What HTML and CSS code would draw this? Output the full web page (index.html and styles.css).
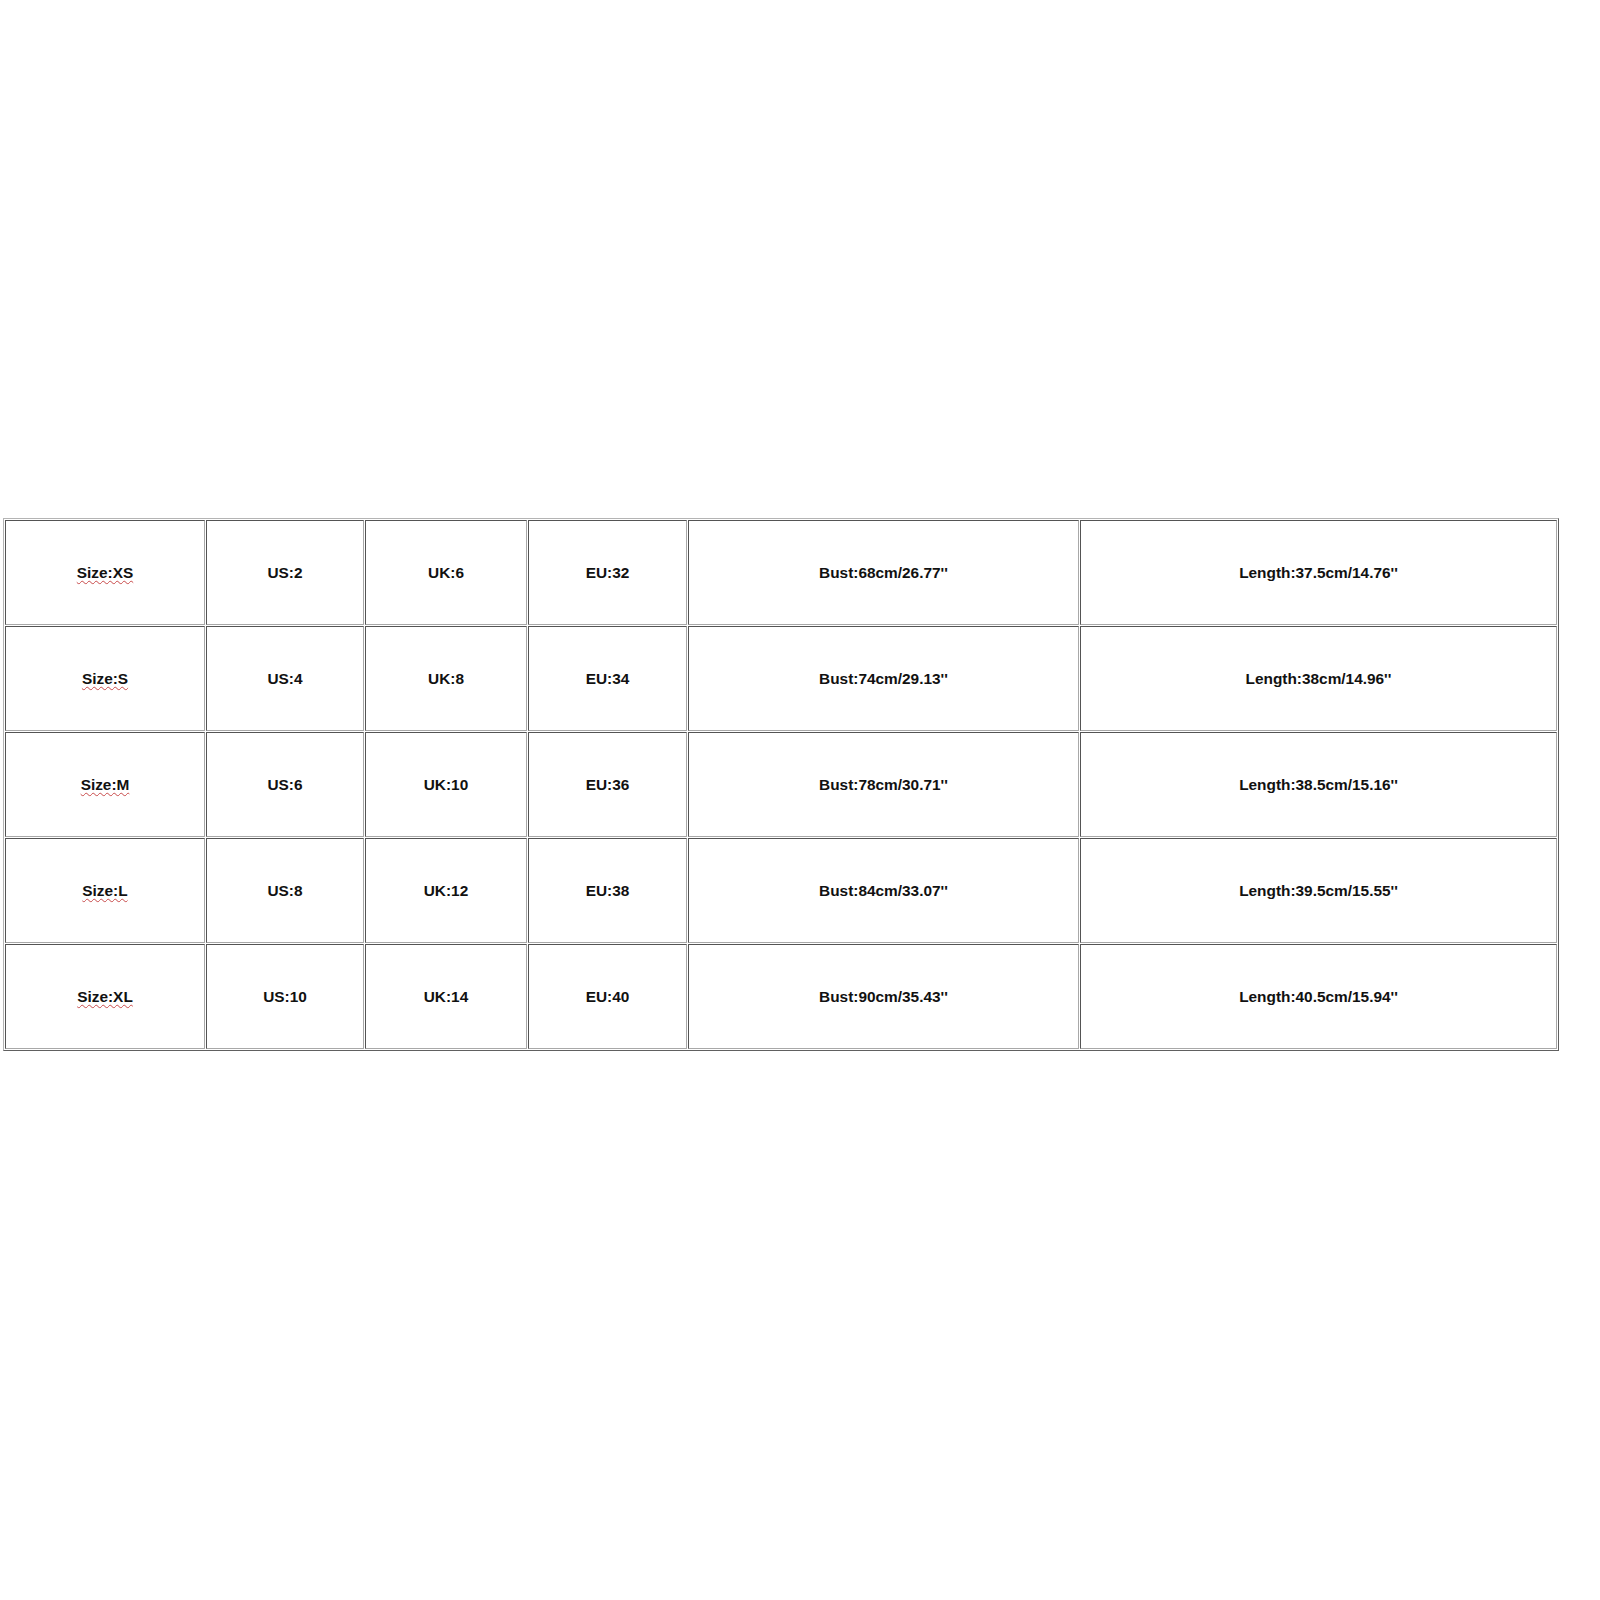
FILE: index.html
```html
<!DOCTYPE html>
<html>
<head>
<meta charset="utf-8">
<link rel="stylesheet" href="styles.css">
</head>
<body>
<table class="size-table">
  <colgroup>
    <col class="c1"><col class="c2"><col class="c3"><col class="c4"><col class="c5"><col class="c6">
  </colgroup>
  <tr>
    <td><span class="spell">Size:XS</span></td><td>US:2</td><td>UK:6</td><td>EU:32</td><td>Bust:68cm/26.77''</td><td>Length:37.5cm/14.76''</td>
  </tr>
  <tr>
    <td><span class="spell">Size:S</span></td><td>US:4</td><td>UK:8</td><td>EU:34</td><td>Bust:74cm/29.13''</td><td>Length:38cm/14.96''</td>
  </tr>
  <tr>
    <td><span class="spell">Size:M</span></td><td>US:6</td><td>UK:10</td><td>EU:36</td><td>Bust:78cm/30.71''</td><td>Length:38.5cm/15.16''</td>
  </tr>
  <tr>
    <td><span class="spell">Size:L</span></td><td>US:8</td><td>UK:12</td><td>EU:38</td><td>Bust:84cm/33.07''</td><td>Length:39.5cm/15.55''</td>
  </tr>
  <tr>
    <td><span class="spell">Size:XL</span></td><td>US:10</td><td>UK:14</td><td>EU:40</td><td>Bust:90cm/35.43''</td><td>Length:40.5cm/15.94''</td>
  </tr>
</table>
</body>
</html>
```
FILE: styles.css
```css
html, body {
  margin: 0;
  padding: 0;
  background: #ffffff;
}
body {
  font-family: "Liberation Sans", Arial, sans-serif;
  padding: 518px 0 0 3px;
}
.size-table {
  table-layout: fixed;
  width: 1556px;
  border-collapse: separate;
  border-spacing: 1px;
  border: 1px outset #b4b4b4;
}
.c1 { width: 200px; }
.c2 { width: 158px; }
.c3 { width: 162px; }
.c4 { width: 159px; }
.c5 { width: 391px; }
.c6 { width: 477px; }
.size-table td {
  box-sizing: border-box;
  height: 105px;
  border: 1px inset #a8a8a8;
  text-align: center;
  vertical-align: middle;
  padding: 0;
  font-size: 15.4px;
  font-weight: bold;
  color: #111111;
}
.spell {
  text-decoration: underline wavy #c84a4a;
  text-decoration-thickness: 1px;
  text-underline-offset: 2px;
}
```
